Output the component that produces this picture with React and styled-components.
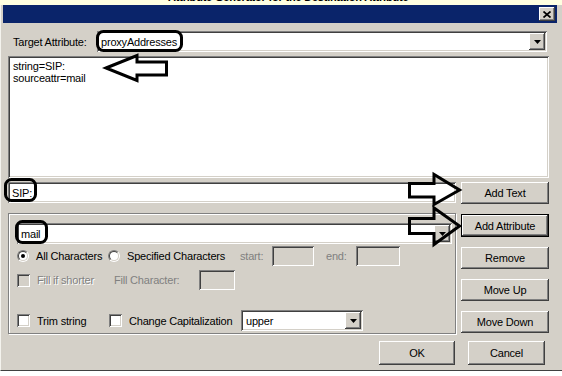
import React from 'react'
import styled, { createGlobalStyle, css } from 'styled-components'

const face = '#d4d0c8'

const GlobalStyle = createGlobalStyle`
  body { margin: 0; background: #fff; }
  #root {
    font-family: "Liberation Sans", Arial, sans-serif;
    font-size: 11px;
    letter-spacing: -0.2px;
    color: #000;
  }
`

const raised = css`
  background: ${face};
  box-shadow: inset -1px -1px #404040, inset 1px 1px #fff, inset -2px -2px #808080, inset 2px 2px ${face};
`
const sunken = css`
  box-shadow: inset 1px 1px #808080, inset -1px -1px #fff, inset 2px 2px #404040, inset -2px -2px ${face};
`

const Screen = styled.div`
  position: relative;
  width: 562px;
  height: 376px;
  overflow: hidden;
  background: #fff;
`
const Backdrop = styled.div`
  height: 5px;
  background: #ffffe1;
  overflow: hidden;
  padding-left: 168px;
`
const BackdropText = styled.div`
  margin-top: -9px;
  font-weight: bold;
  line-height: 12px;
  white-space: nowrap;
`
const Dialog = styled.div`
  display: flex;
  flex-direction: column;
  height: 366px;
  box-sizing: border-box;
  background: ${face};
  border-bottom: 1px solid #404040;
  border-left: 1px solid #f4f3ee;
`
const TitleBar = styled.div`
  height: 18px;
  margin: 0 5px 0 2px;
  padding-right: 2px;
  background: #0a246a;
  display: flex;
  justify-content: flex-end;
  align-items: center;
`
const CloseBtn = styled.div`
  width: 16px;
  height: 14px;
  ${raised};
  display: flex;
  align-items: center;
  justify-content: center;
`
const Content = styled.div`
  flex: 1;
  padding: 8px 14px 0 7px;
  display: flex;
  flex-direction: column;
`
const TargetRow = styled.div`
  display: flex;
  align-items: center;
  height: 21px;
`
const FieldLabel = styled.div`
  width: 89px;
  padding-left: 5px;
  box-sizing: border-box;
`
const Combo = styled.div`
  display: flex;
  align-items: center;
  width: ${p => p.$w}px;
  height: 21px;
  box-sizing: border-box;
  padding: 2px;
  background: #fff;
  ${sunken};
  flex-shrink: 0;
`
const ComboText = styled.div`
  flex: 1;
  padding-left: ${p => p.$pad ?? 2}px;
`
const DropBtn = styled.div`
  width: 16px;
  height: 17px;
  ${raised};
  display: flex;
  align-items: center;
  justify-content: center;
`
const ListBox = styled.div`
  margin-top: 4px;
  width: 541px;
  height: 122px;
  box-sizing: border-box;
  padding: 4px 5px;
  line-height: 12px;
  background: #fff;
  ${sunken};
`
const Lower = styled.div`
  display: grid;
  grid-template-columns: 448px 88px;
  column-gap: 5px;
  margin-top: 4px;
`
const LeftCol = styled.div`
  display: flex;
  flex-direction: column;
`
const TextBox = styled.div`
  width: ${p => (p.$w ? `${p.$w}px` : '100%')};
  height: ${p => p.$h ?? 21}px;
  box-sizing: border-box;
  padding-left: 4px;
  display: flex;
  align-items: center;
  background: ${p => (p.$disabled ? face : '#fff')};
  ${sunken};
  flex-shrink: 0;
`
const GroupBox = styled.div`
  margin-top: 10px;
  height: 121px;
  box-sizing: border-box;
  border: 1px solid #808080;
  box-shadow: inset 1px 1px #fff, 1px 1px #fff;
  padding: 9px 3px 0 8px;
  display: flex;
  flex-direction: column;
`
const OptionsRow = styled.div`
  display: flex;
  align-items: center;
  height: ${p => p.$h ?? 20}px;
  margin-top: ${p => p.$mt}px;
`
const Option = styled.label`
  display: flex;
  align-items: center;
  gap: 7px;
  width: ${p => p.$w}px;
  flex-shrink: 0;
  white-space: nowrap;
`
const Label = styled.span`
  width: ${p => (p.$w ? `${p.$w}px` : 'auto')};
  flex-shrink: 0;
  white-space: nowrap;
  color: ${p => (p.$disabled ? '#808080' : '#000')};
  text-shadow: ${p => (p.$embossed ? '1px 1px #fff' : 'none')};
`
const Radio = styled.span`
  position: relative;
  width: 12px;
  height: 12px;
  box-sizing: border-box;
  border-radius: 50%;
  border: 1px solid;
  border-color: #808080 #fff #fff #808080;
  flex-shrink: 0;
  &::before {
    content: '';
    position: absolute;
    inset: 0;
    border-radius: 50%;
    border: 1px solid;
    border-color: #404040 ${face} ${face} #404040;
    background: #fff;
  }
  &::after {
    content: '';
    display: ${p => (p.$checked ? 'block' : 'none')};
    position: absolute;
    left: 3px;
    top: 3px;
    width: 4px;
    height: 4px;
    border-radius: 50%;
    background: #000;
  }
`
const Check = styled.span`
  width: 13px;
  height: 13px;
  box-sizing: border-box;
  background: ${p => (p.$disabled ? face : '#fff')};
  ${sunken};
  flex-shrink: 0;
`
const RightCol = styled.div`
  display: flex;
  flex-direction: column;
  gap: 10px;
`
const Button = styled.button`
  width: ${p => (p.$w ? `${p.$w}px` : '100%')};
  height: ${p => p.$h ?? 22}px;
  box-sizing: border-box;
  padding: 0;
  font: inherit;
  letter-spacing: inherit;
  color: #000;
  border: ${p => (p.$default ? '1px solid #000' : 'none')};
  ${raised};
`
const Footer = styled.div`
  display: flex;
  justify-content: flex-end;
  gap: 13px;
  margin-top: 7px;
  padding-right: 3px;
`
const Annotations = styled.svg`
  position: absolute;
  left: 0;
  top: 0;
  pointer-events: none;
`

function DownArrow() {
  return (
    <svg width="7" height="4" viewBox="0 0 7 4">
      <polygon points="0,0 7,0 3.5,4" fill="#000" />
    </svg>
  )
}

function ComboBox({ w, value, pad }) {
  return (
    <Combo $w={w}>
      <ComboText $pad={pad}>{value}</ComboText>
      <DropBtn><DownArrow /></DropBtn>
    </Combo>
  )
}

export default function App() {
  return (
    <Screen>
      <GlobalStyle />
      <Backdrop>
        <BackdropText>Attribute Generator for the Destination Attribute</BackdropText>
      </Backdrop>
      <Dialog>
        <TitleBar>
          <CloseBtn>
            <svg width="8" height="7" viewBox="0 0 8 7">
              <path d="M0.5 0.5 L7.5 6.5 M7.5 0.5 L0.5 6.5" stroke="#000" strokeWidth="1.7" />
            </svg>
          </CloseBtn>
        </TitleBar>
        <Content>
          <TargetRow>
            <FieldLabel>Target Attribute:</FieldLabel>
            <ComboBox w={450} value="proxyAddresses" />
          </TargetRow>
          <ListBox>
            <div>string=SIP:</div>
            <div>sourceattr=mail</div>
          </ListBox>
          <Lower>
            <LeftCol>
              <TextBox>SIP:</TextBox>
              <GroupBox>
                <ComboBox w={435} value="mail" />
                <OptionsRow $mt={2}>
                  <Option $w={91}><Radio $checked />All Characters</Option>
                  <Option $w={132}><Radio />Specified Characters</Option>
                  <Label $w={32} $disabled>start:</Label>
                  <TextBox $w={42} $h={20} $disabled />
                  <Label $w={12} />
                  <Label $w={30} $disabled>end:</Label>
                  <TextBox $w={44} $h={20} $disabled />
                </OptionsRow>
                <OptionsRow $mt={4}>
                  <Option $w={97}><Check $disabled /><Label $disabled $embossed>Fill if shorter</Label></Option>
                  <Label $w={85} $disabled>Fill Character:</Label>
                  <TextBox $w={36} $h={20} $disabled />
                </OptionsRow>
                <OptionsRow $mt={20} $h={21}>
                  <Option $w={92}><Check />Trim string</Option>
                  <Option $w={132}><Check />Change Capitalization</Option>
                  <ComboBox w={122} value="upper" pad={3} />
                </OptionsRow>
              </GroupBox>
            </LeftCol>
            <RightCol>
              <Button>Add Text</Button>
              <Button $default $h={23}>Add Attribute</Button>
              <Button>Remove</Button>
              <Button>Move Up</Button>
              <Button>Move Down</Button>
            </RightCol>
          </Lower>
          <Footer>
            <Button $w={76} $h={24}>OK</Button>
            <Button $w={77} $h={24}>Cancel</Button>
          </Footer>
        </Content>
      </Dialog>
      <Annotations width="562" height="376" viewBox="0 0 562 376">
        <g fill="none" stroke="#000" strokeWidth="3" strokeLinejoin="miter">
          <rect x="97.5" y="31.5" width="84" height="19" rx="6" />
          <rect x="5.5" y="179.5" width="30" height="21" rx="6" />
          <rect x="16.5" y="221.5" width="30" height="21" rx="6" />
          <path d="M106 68 L137 55.5 L137 62 L166.5 62 L166.5 75 L137 75 L137 80.5 Z" />
          <path d="M409.5 183.5 L434 183.5 L434 174.5 L459.5 190 L434 204.5 L434 197 L409.5 197 Z" />
          <path d="M409.5 218.5 L434 218.5 L434 208 L459.5 226 L434 244.5 L434 233.5 L409.5 233.5 Z" />
        </g>
      </Annotations>
    </Screen>
  )
}
